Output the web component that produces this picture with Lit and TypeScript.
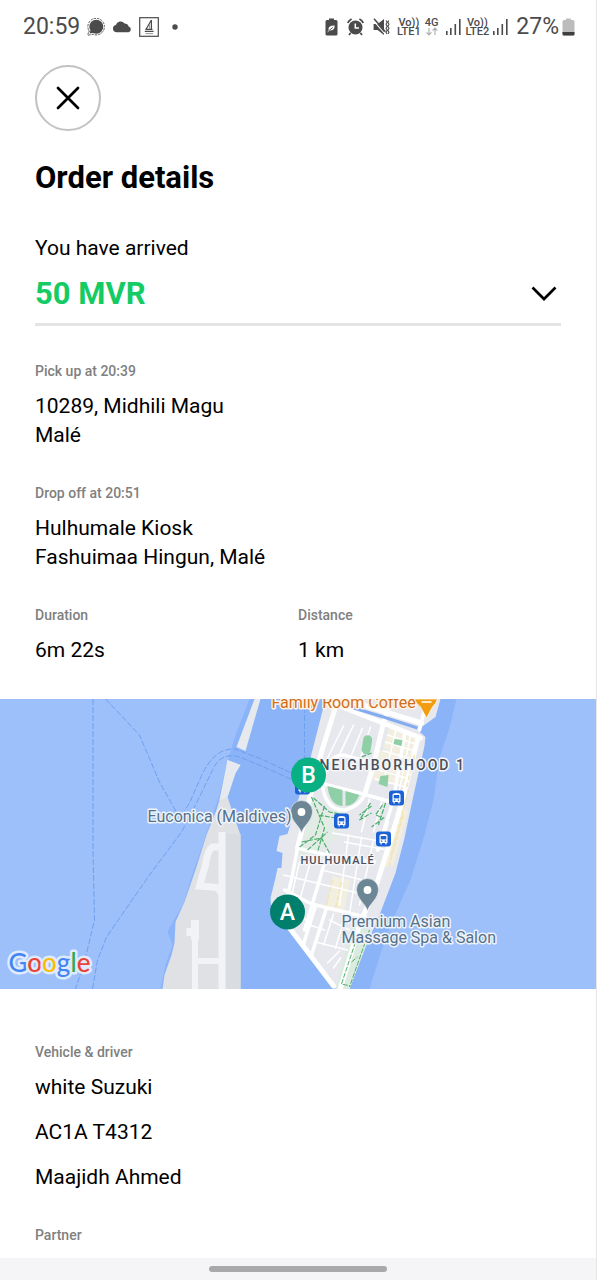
import { LitElement, html, svg, css } from "lit";
import { customElement, property, state } from "lit/decorators.js";

@customElement("status-bar")
class StatusBar extends LitElement {
  static styles = css`
    :host {
      display: flex;
      justify-content: space-between;
      align-items: center;
      height: 54px;
      padding: 0 21px 0 23px;
      color: #4b4b4b;
      font-size: 23px;
      line-height: 54px;
    }
    .group {
      display: flex;
      align-items: center;
      gap: 7px;
    }
    .charge {
      display: flex;
      align-items: center;
      gap: 3px;
    }
    svg {
      display: block;
      flex: none;
    }
    .spaced {
      margin-right: 2px;
    }
    .net {
      display: flex;
      flex-direction: column;
      align-items: center;
      font-size: 11px;
      font-weight: 500;
      line-height: 9px;
    }
    .pair {
      display: flex;
      align-items: center;
      gap: 4px;
    }
  `;

  private bars() {
    return html`<svg width="16" height="18" viewBox="0 0 16 18" aria-hidden="true">
      <g fill="#4b4b4b">
        <rect x="0" y="13" width="1.6" height="4" />
        <rect x="4" y="10" width="1.6" height="7" />
        <rect x="8.5" y="6" width="1.6" height="11" />
        <rect x="13" y="1" width="1.6" height="16" />
      </g>
    </svg>`;
  }

  render() {
    return html`
      <div class="group">
        <span class="clock">20:59</span>
        <svg width="18" height="18" viewBox="0 0 18 18" aria-hidden="true">
          <circle cx="9.3" cy="8.7" r="7" fill="#4b4b4b" />
          <path d="M4 11 L2.6 15.6 L7.5 14.5z" fill="#4b4b4b" />
          <path d="M3.4 14.6 A8.3 8.3 0 1 1 6 16.3 L0.8 17.3 L1.8 12.5" fill="none" stroke="#4b4b4b" stroke-width="0.9" stroke-dasharray="2.4 1" />
        </svg>
        <svg width="20" height="12" viewBox="0 0 20 12" aria-hidden="true">
          <path d="M4.2 11.2 A3.6 3.6 0 0 1 3.8 4.1 A4.9 4.9 0 0 1 12.6 2.6 A4.2 4.2 0 0 1 16.6 5.4 A3 3 0 0 1 16.6 11.2z" fill="#4b4b4b" />
        </svg>
        <svg width="20" height="20" viewBox="0 0 20 20" aria-hidden="true">
          <rect x="0.7" y="0.7" width="18.6" height="18.6" fill="none" stroke="#4b4b4b" stroke-width="1.2" />
          <path d="M12.4 3 L12.4 13 M12.4 3 L7 12.4 H13.5 M5.8 14.4 H14.6" fill="none" stroke="#4b4b4b" stroke-width="1.2" />
          <path d="M10.6 7.5 V12 M6.6 16.6 H14" stroke="#888" stroke-width="0.9" />
        </svg>
        <svg width="30" height="6" viewBox="0 0 30 6" aria-hidden="true">
          <circle cx="9" cy="3" r="2.7" fill="#4b4b4b" />
        </svg>
      </div>
      <div class="group">
        <svg class="spaced" width="13" height="18" viewBox="0 0 13 18" aria-hidden="true">
          <path d="M4 0.5 H9 V2 H11 Q12.5 2 12.5 3.5 V16 Q12.5 17.5 11 17.5 H2 Q0.5 17.5 0.5 16 V3.5 Q0.5 2 2 2 H4z" fill="#4b4b4b" />
          <path d="M3.4 11.5 Q3.4 7.4 9.6 7.6 Q9.8 12.6 5.4 12.4z" fill="#fff" />
          <path d="M2.6 13.8 L7.8 9.4" stroke="#4b4b4b" stroke-width="0.9" />
          <path d="M2.6 13.8 L4.6 12" stroke="#fff" stroke-width="0.9" />
        </svg>
        <svg class="spaced" width="17" height="18" viewBox="0 0 17 18" aria-hidden="true">
          <circle cx="8.5" cy="9.5" r="7" fill="#4b4b4b" />
          <path d="M0.8 5 Q2 2.2 4.6 1 M16.2 5 Q15 2.2 12.4 1 M3.6 15 L2 17 M13.4 15 L15 17" fill="none" stroke="#4b4b4b" stroke-width="1.8" />
          <path d="M8.3 5.4 V10 H12" fill="none" stroke="#fff" stroke-width="1.5" />
        </svg>
        <svg width="17" height="18" viewBox="0 0 17 18" aria-hidden="true">
          <path d="M0.6 6 H4.6 L11 1 V17 L4.6 12 H0.6z" fill="#4b4b4b" />
          <path d="M0 2.2 L12 16" stroke="#fff" stroke-width="1.1" />
          <path d="M1 0.8 L12.4 13.8" stroke="#4b4b4b" stroke-width="1.5" />
          <path d="M13 2.5 l1.2 1.8 -1.2 2 1.200 2 -1.2 2 1.200 2 -1.2 2 1 1.600 M15.800 2.500 l-1 1.8 1.200 2 -1.2 2 1.200 2 -1.2 2 1.200 2 -1 1.600" fill="none" stroke="#4b4b4b" stroke-width="1.1" />
        </svg>
        <span class="pair">
          <span class="net"><span>Vo))</span><span>LTE1</span></span>
          <span class="net">
            <span>4G</span>
            <svg width="12" height="9" viewBox="0 0 12 9" aria-hidden="true">
              <path d="M3 1 V8 M0.6 5.4 L3 8 L5.4 5.4 M9 8 V1 M6.6 3.6 L9 1 L11.4 3.6" fill="none" stroke="#aaa" stroke-width="1.1" />
            </svg>
          </span>
        </span>
        <span class="pair">${this.bars()}<span class="net"><span>Vo))</span><span>LTE2</span></span>${this.bars()}</span>
        <span class="charge">
          <span>27%</span>
          <svg width="13" height="18" viewBox="0 0 13 18" aria-hidden="true">
            <path d="M4 0.5 H9 V2 H11 Q12.5 2 12.5 3.5 V16 Q12.5 17.5 11 17.5 H2 Q0.5 17.5 0.5 16 V3.5 Q0.5 2 2 2 H4z" fill="#bcbcbc" />
            <path d="M0.5 14 H12.5 V16 Q12.5 17.5 11 17.5 H2 Q0.5 17.5 0.5 16z" fill="#3f3f3f" />
          </svg>
        </span>
      </div>
    `;
  }
}

@customElement("order-field")
class OrderField extends LitElement {
  @property() label = "";
  @property({ type: Array }) lines: string[] = [];
  @property({ type: Boolean, reflect: true }) loose = false;

  static styles = css`
    :host {
      display: flex;
      flex-direction: column;
      gap: 12px;
      flex: 1;
    }
    .label {
      color: #808080;
      font-size: 14px;
      font-weight: 500;
      line-height: 18px;
    }
    .values {
      display: flex;
      flex-direction: column;
      color: #000;
      font-size: 21px;
      line-height: 29px;
    }
    :host([loose]) .values {
      gap: 16px;
    }
  `;

  render() {
    return html`
      <div class="label">${this.label}</div>
      ${this.lines.length
        ? html`<div class="values">${this.lines.map((line) => html`<span>${line}</span>`)}</div>`
        : null}
    `;
  }
}

@customElement("route-map")
class RouteMap extends LitElement {
  static styles = css`
    :host {
      display: block;
      background: #9dc0fa;
    }
    .map {
      display: block;
      width: 100%;
      height: 290px;
    }
    text {
      paint-order: stroke;
      stroke-linejoin: round;
    }
    .place {
      font-size: 16px;
      fill: #55718a;
      stroke: #eef3fb;
      stroke-width: 3px;
    }
    .area {
      font-weight: 500;
      fill: #4a4e57;
      stroke: #f4f5f8;
      stroke-width: 3px;
    }
    .district {
      font-size: 14px;
      letter-spacing: 2px;
    }
    .town {
      font-size: 11px;
      letter-spacing: 1px;
    }
    .cafe {
      font-size: 16px;
      fill: #cf6f1c;
      stroke: #fff4e6;
      stroke-width: 3px;
    }
    .stop {
      font-size: 23px;
      font-weight: 500;
      fill: #fff;
      text-anchor: middle;
    }
    .brand {
      font-family: Lato, Roboto, sans-serif;
      font-size: 26px;
      font-weight: 500;
      stroke: #dfeafd;
      stroke-width: 5px;
    }
    .blue { fill: #4285f4; }
    .red { fill: #ea4335; }
    .yellow { fill: #fbbc05; }
    .green { fill: #34a853; }
  `;

  private bus(x: number, y: number) {
    return svg`<g transform="translate(${x} ${y})">
      <rect x="-7.5" y="-7.5" width="15" height="15" rx="3" fill="#1b62d6" />
      <path d="M-4 4 V-3 Q-4 -5 0 -5 Q4 -5 4 -3 V4 H3 V5.5 H1.8 V4 H-1.8 V5.5 H-3 V4z" fill="#fff" />
      <rect x="-2.8" y="-3" width="5.6" height="3.4" fill="#1b62d6" />
      <path d="M-2.6 2.2 h1.4 M1.2 2.2 h1.4" stroke="#1b62d6" stroke-width="1.2" />
    </g>`;
  }

  private pin(x: number, y: number) {
    return svg`<g transform="translate(${x} ${y})">
      <path d="M0 21 C-1.5 14 -11 9 -11 -0.5 A11 11 0 0 1 11 -0.5 C11 9 1.5 14 0 21z" fill="#6d8696" stroke="#e6ecf2" stroke-width="0.7" />
      <circle r="3.9" fill="#fff" />
    </g>`;
  }

  render() {
    return html`<svg class="map" viewBox="0 0 597 290" preserveAspectRatio="xMidYMid slice" role="img" aria-label="Route map">
      <g transform="translate(0 -699)">
      <rect x="-600" y="699" width="1800" height="290" fill="#9dc0fa" />
      <path d="M250 699 L236 735 L227 765 L220 795 L203 845 L191 880 L184 904 L172 924 L168 932 L173 945 L166 965 L161 989 L370 989 L380 957 L391 925 L411 880 L425 835 L434 800 L440 758 L450 728 L457 699z" fill="#8ab3f8" />

      <g fill="none" stroke="#6fa0ee" stroke-width="1" stroke-dasharray="6 2">
        <path d="M93.5 699 V850 L95 920 L86 958 L76 989" />
        <path d="M106 699 L140 735 L160 782 L178 814" />
        <path d="M93 989 L98 960 L107 937 L150 875 L182 832 L200 797 L214 768 Q222 752 240 757 L262 766 L300 783" />
        <path d="M178 822 L190 803 L201 778 Q214 748 235 749 L262 759 L300 777" />
        <path d="M305 699 V760" />
      </g>

      <path d="M255 699 H261 L246 751 L237 747z" fill="#e6e9ee" />
      <path d="M228 760 L241 765 L236 773 L228 797 L233 812 L241 835 V989 H163 L165 975 L172 955 L175 943 L176 922 L185 902 L196 870 L207 835 L217 810 L225 783z" fill="#dfe1e5" />
      <rect x="226" y="834" width="15" height="155" fill="#d9dde2" />
      <path d="M228 760 L241 765 L236 773 L228 797 L220 800z" fill="#e6e9ee" />
      <g fill="none" stroke="#f1f3f7" stroke-width="7">
        <path d="M222.5 832 V989" />
        <path d="M221 847 H213 Q208 850 206 865 L200 886 L213 887 Q220 887 222 894" />
        <path d="M195.5 930 V989 M195 961 H222" stroke-width="6" />
        <path d="M187 932 H197 M195.5 920 V940" stroke-width="8" />
      </g>

      <path d="M326 699 L313 750 L305 780 L296 808 L288 834 L280 836 L277 851 L283 853 L282 868 L278 868 L276 878 L271 898 L272 912 L290 930 L331 983 L336 989 H350 L361 958 L380 915 L396 873 L405 838 L413 800 L425 746 L426 737 L418 730 L436 717 L441 699z" fill="#e6e8ee" />

      <path d="M355 915 L336 989 H350 L372 932z" fill="#dcebdf" />
      <path d="M307 790 L325 812 L345 810 L338 838 L316 855 H298z" fill="#e2ece5" />
      <g fill="#f2eee0">
        <path d="M380 750 H412 L405 786 L372 780z" />
        <path d="M390 725 L420 735 L414 757 L384 748z" />
        <path d="M398 808 L409 810 L394 865 L382 868z" />
        <path d="M333 876 L351 880 L344 914 L326 910z" />
      </g>

      <g fill="none" stroke="#fff" stroke-linecap="round" stroke-linejoin="round">
        <g stroke-width="5">
          <path d="M337 704 L322 752 L311 795 L298 848" />
          <path d="M290 928 L334 986" />
          <path d="M340 706 L386 724 L421 738" />
          <path d="M348 700 L386 712 L422 723" />
          <path d="M391 700 L383 727 L374 765 L365 795" />
          <path d="M418 740 L403 800 L388 850 L376 888 L360 925 L341 988" />
        </g>
        <g stroke-width="3.5">
          <path d="M298 848 L327 855 L375 862" />
          <path d="M298 848 L292 880 L288 895" />
          <path d="M328 852 L320 880 L305 930" />
          <path d="M285 890 L312 904 L366 917" />
          <path d="M327 908 L312 955 M316 906 L304 944" />
          <path d="M324 784 L364 794 L402 805" />
          <path d="M327 765 L323 785 Q326 811 346 810 Q360 806 365 795" />
          <path d="M327 765 Q332 756 344 755 L369 762" />
          <path d="M405 735 L394 800 L378 850" />
          <path d="M427 702 L420 730" />
        </g>
        <g stroke-width="1.5">
          <path d="M344 726 L328 758 M354 725 L340 755 M363 728 L352 755 M349 735 L341 752 M371 727 L361 758" />
          <path d="M388 735 L416 744 M386 742 L415 751 M384 751 L412 759 M382 761 L410 768 M379 770 L407 778 M376 779 L406 787" />
          <path d="M397 728 L384 782 M411 735 L400 790" />
          <path d="M333 833 L392 843 M345 842 L388 850 M349 835 L340 905 M362 837 L350 914 M374 840 L360 905" />
          <path d="M284 875 L375 897 M300 862 L290 905 M322 870 L372 882 M310 865 L298 908" />
          <path d="M330 920 L350 930 M316 942 L348 950 M334 914 L324 945 M310 925 L325 930 M300 914 L312 926 M345 918 L336 948" />
          <path d="M370 799 L362 832 M382 802 L374 832 M389 822 L380 850" />
          <path d="M340 951 L328 963 M334 968 L341 958" />
        </g>
      </g>
      <path d="M354 708 L384 717 L418 728" fill="none" stroke="#83acf0" stroke-width="3" />

      <g fill="#8fcfa5">
        <rect x="363" y="735" width="9" height="19" rx="4.5" transform="rotate(9 367 744)" />
        <path d="M328 786 L343 790 V806 Q330 805 328 786z" />
        <path d="M346 791 L360 795 Q355 806 346 806z" />
        <path d="M395 739 L403 740 L402 746 L394 744z" />
        <path d="M381 776 L389 775 L388 787 L379 784z" />
      </g>
      <g fill="none" stroke="#4fae70" stroke-width="1.2" stroke-dasharray="5 1.5">
        <path d="M312 797 L325 828 L318 852 M314 798 L330 812 L345 815 M325 806 L316 835 L300 847 M302 842 L322 838 L330 853 M308 850 L328 832 M319 815 L336 818" />
        <path d="M371 803 L360 820 L372 813 M372 806 L360 815 M383 805 L376 815 L384 818 L372 827 M386 803 L379 825" />
        <path d="M362 757 L372 753" />
        <path d="M358 936 L342 984 L351 986 M370 930 L350 987 M352 962 L358 957" stroke-width="1" />
      </g>
      <g fill="none" stroke="#f3e5b5" stroke-width="1.5" stroke-dasharray="5 2">
        <path d="M409 790 L391 858 M404 815 L389 868 M415 755 L407 788 M333 880 L327 906 M342 882 L336 908" />
      </g>

      <text class="cafe" x="272" y="708">Family Room Coffee</text>
      <path d="M415 699 H438 Q437 703 433 707 L427 718 L421 707 Q416 703 415 699z" fill="#f29d0f" stroke="#fff" stroke-width="0.7" />
      <path d="M422 702 H432" stroke="#fff" stroke-width="1.6" />

      ${this.bus(303, 787)} ${this.bus(397, 798)} ${this.bus(342, 821)} ${this.bus(384, 839)}
      ${this.pin(302, 812)} ${this.pin(368, 890)}

      <text class="area district" x="320" y="770">NEIGHBORHOOD 1</text>
      <text class="area town" x="301" y="864">HULHUMALÉ</text>
      <text class="place" x="148" y="822">Euconica (Maldives)</text>
      <text class="place" x="342" y="927">Premium Asian</text>
      <text class="place" x="342" y="943">Massage Spa &amp; Salon</text>

      <circle cx="309" cy="775" r="17.5" fill="#08b084" />
      <text class="stop" x="309" y="783">B</text>
      <circle cx="288" cy="912" r="17.5" fill="#007f6d" />
      <text class="stop" x="288" y="920">A</text>

      <text class="brand" x="9" y="972"><tspan class="blue">G</tspan><tspan class="red">o</tspan><tspan class="yellow">o</tspan><tspan class="blue">g</tspan><tspan class="green">l</tspan><tspan class="red">e</tspan></text>
      </g>
    </svg>`;
  }
}

@customElement("app-root")
class AppRoot extends LitElement {
  @state() private expanded = false;

  static styles = css`
    :host {
      display: flex;
      flex-direction: column;
      box-sizing: border-box;
      min-height: 100vh;
      border-right: 1px solid #e6e6e6;
      background: #fff;
      color: #000;
      font-family: Roboto, "Liberation Sans", sans-serif;
    }
    .head {
      padding: 11px 35px 36px;
    }
    button {
      border: 0;
      padding: 0;
      background: none;
      color: inherit;
      font: inherit;
      cursor: pointer;
    }
    .close {
      display: grid;
      place-items: center;
      box-sizing: border-box;
      width: 66px;
      height: 66px;
      border: 2px solid #c2c2c2;
      border-radius: 50%;
    }
    h1 {
      margin: 28px 0 37px;
      font-size: 31px;
      font-weight: 700;
      line-height: 38px;
    }
    .state {
      margin: 0;
      font-size: 21px;
      line-height: 29px;
    }
    .fare {
      display: flex;
      justify-content: space-between;
      align-items: center;
      width: 100%;
      padding: 12px 4px 10px 0;
      border-bottom: 3px solid #e4e4e4;
    }
    .price {
      color: #14cb64;
      font-size: 31px;
      font-weight: 700;
      line-height: 38px;
    }
    .trip {
      display: flex;
      flex-direction: column;
      gap: 34px;
      padding: 0 35px 34px;
    }
    .row {
      display: flex;
    }
    .crew {
      display: flex;
      flex-direction: column;
      gap: 34px;
      padding: 54px 35px 14px;
    }
    .nav {
      display: flex;
      justify-content: center;
      align-items: center;
      height: 22px;
      margin-top: auto;
      background: #f5f5f7;
    }
    .handle {
      width: 30%;
      height: 6px;
      border-radius: 3px;
      background: #a9a9ab;
    }
  `;

  render() {
    return html`
      <status-bar></status-bar>
      <header class="head">
        <button class="close" aria-label="Close">
          <svg width="24" height="24" viewBox="0 0 24 24" aria-hidden="true">
            <path d="M2 2 L22 22 M22 2 L2 22" stroke="#000" stroke-width="2.7" stroke-linecap="round" />
          </svg>
        </button>
        <h1>Order details</h1>
        <p class="state">You have arrived</p>
        <button class="fare" aria-expanded=${this.expanded ? "true" : "false"} @click=${() => (this.expanded = !this.expanded)}>
          <span class="price">50 MVR</span>
          <svg width="26" height="16" viewBox="0 0 26 16" aria-hidden="true">
            <path d="M1.5 1.5 L13 13 L24.5 1.5" fill="none" stroke="#000" stroke-width="2.7" />
          </svg>
        </button>
      </header>
      <section class="trip">
        <order-field label="Pick up at 20:39" .lines=${["10289, Midhili Magu", "Malé"]}></order-field>
        <order-field label="Drop off at 20:51" .lines=${["Hulhumale Kiosk", "Fashuimaa Hingun, Malé"]}></order-field>
        <div class="row">
          <order-field label="Duration" .lines=${["6m 22s"]}></order-field>
          <order-field label="Distance" .lines=${["1 km"]}></order-field>
        </div>
      </section>
      <route-map></route-map>
      <section class="crew">
        <order-field loose label="Vehicle &amp; driver" .lines=${["white Suzuki", "AC1A T4312", "Maajidh Ahmed"]}></order-field>
        <order-field label="Partner"></order-field>
      </section>
      <footer class="nav"><div class="handle"></div></footer>
    `;
  }
}
